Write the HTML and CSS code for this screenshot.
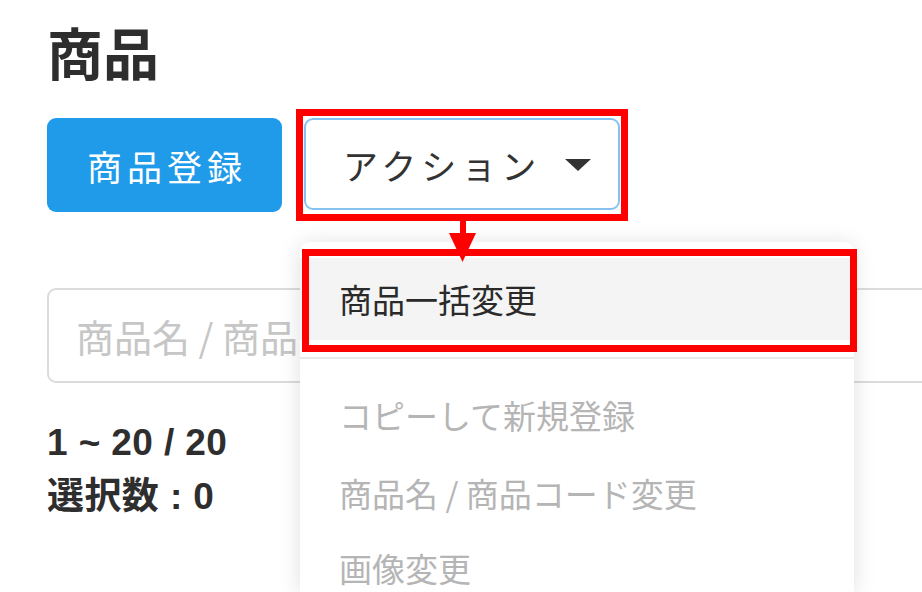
FILE: index.html
```html
<!DOCTYPE html>
<html lang="ja">
<head>
<meta charset="utf-8">
<title>商品</title>
<link rel="stylesheet" href="styles.css">
</head>
<body>
<main class="page">
  <h1 class="title">商品</h1>
  <div class="toolbar">
    <button class="btn btn-primary" type="button">商品登録</button>
    <div class="action">
      <button class="btn btn-outline" type="button">アクション<span class="caret"></span></button>
      <span class="mark mark-button"></span>
      <svg class="arrow" width="27" height="41" viewBox="0 0 27 41">
        <rect x="11" y="0" width="6" height="14" fill="#ff0000"/>
        <polygon points="0,12 27,12 13.5,41" fill="#ff0000"/>
      </svg>
      <div class="menu">
        <div class="menu-item is-active">商品一括変更</div>
        <div class="menu-divider"></div>
        <div class="menu-item is-disabled">コピーして新規登録</div>
        <div class="menu-item is-disabled">商品名 / 商品コード変更</div>
        <div class="menu-item is-disabled is-last">画像変更</div>
        <span class="mark mark-item"></span>
      </div>
    </div>
  </div>
  <div class="search">
    <input class="search-input" type="text" placeholder="商品名 / 商品コード / JANコード">
  </div>
  <div class="count">1 ~ 20 / 20</div>
  <div class="count">選択数 : 0</div>
</main>
</body>
</html>
```

FILE: styles.css
```css
html, body {
  margin: 0;
  padding: 0;
  background: #ffffff;
}

body {
  font-family: "Liberation Sans", "Noto Sans CJK JP", sans-serif;
  color: #333333;
}

.page {
  width: 922px;
  height: 592px;
  box-sizing: border-box;
  padding: 18px 0 0 47px;
  overflow: hidden;
}

.title {
  margin: 0;
  font-family: "Noto Sans CJK JP", sans-serif;
  font-size: 56px;
  font-weight: 700;
  line-height: 66px;
  color: #2e2e2e;
}

.toolbar {
  display: flex;
  align-items: flex-start;
  gap: 22px;
  margin-top: 34px;
}

.btn {
  font-family: "Noto Sans CJK JP", sans-serif;
  font-size: 35px;
  line-height: 1;
  border-radius: 9px;
  cursor: pointer;
  display: flex;
  align-items: center;
  box-sizing: border-box;
}

.btn-primary {
  width: 235px;
  height: 94px;
  justify-content: center;
  padding: 0 0 0 5px;
  background: #1f9bea;
  border: none;
  color: #ffffff;
  letter-spacing: 5px;
}

.action {
  position: relative;
}

.btn-outline {
  width: 316px;
  height: 92px;
  padding: 0 0 0 37px;
  background: #ffffff;
  border: 2px solid #86c2f0;
  color: #333333;
  letter-spacing: 5px;
}

.caret {
  width: 0;
  height: 0;
  margin-left: 24px;
  margin-top: 2px;
  border-left: 13px solid transparent;
  border-right: 13px solid transparent;
  border-top: 12px solid #333333;
}

.mark {
  position: absolute;
  border: 7px solid #ff0000;
  box-sizing: border-box;
  pointer-events: none;
}

.mark-button {
  left: -8px;
  top: -9px;
  width: 332px;
  height: 112px;
}

.arrow {
  position: absolute;
  left: 145px;
  top: 103px;
  z-index: 3;
}

.menu {
  position: absolute;
  left: -4px;
  top: 124px;
  width: 554px;
  height: 350px;
  padding-top: 16px;
  box-sizing: border-box;
  background: #ffffff;
  border-radius: 9px 9px 0 0;
  box-shadow: 0 2px 22px rgba(0, 0, 0, 0.13);
  z-index: 2;
}

.menu-item {
  padding: 19px 0 19px 39px;
  font-family: "Noto Sans CJK JP", sans-serif;
  font-size: 33px;
  line-height: 40px;
  white-space: nowrap;
}

.menu-item.is-active {
  padding-top: 21px;
  padding-bottom: 21px;
  background: #f4f4f4;
  color: #2a2a2a;
}

.menu-item.is-disabled {
  color: #b5b5b5;
}

.menu-item.is-last {
  padding-top: 17px;
  padding-bottom: 0;
  line-height: 38px;
}

.menu-divider {
  height: 2px;
  margin: 17px 0;
  background: #e9e9e9;
}

.mark-item {
  left: 2px;
  top: 7px;
  width: 555px;
  height: 103px;
}

.search {
  margin-top: 76px;
  margin-right: -40px;
}

.search-input {
  display: block;
  width: 100%;
  height: 95px;
  box-sizing: border-box;
  padding: 0 27px;
  border: 2px solid #dcdcdc;
  border-radius: 9px;
  font-family: "Noto Sans CJK JP", sans-serif;
  font-size: 38px;
  outline: none;
}

.search-input::placeholder {
  color: #c6c6c6;
}

.count {
  font-size: 37px;
  font-weight: 700;
  line-height: 54px;
  letter-spacing: 0.4px;
  color: #2e2e2e;
}

.search + .count {
  margin-top: 33px;
}
```
